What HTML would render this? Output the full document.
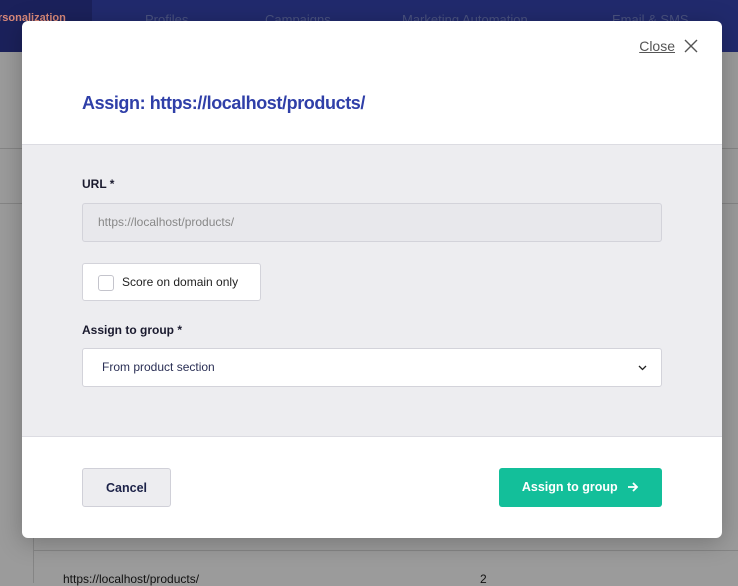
<!DOCTYPE html>
<html><head><meta charset="utf-8"><style>
*{box-sizing:border-box;margin:0;padding:0}
html,body{width:738px;height:583px;background:#9b9b9b}
body{position:relative;overflow:hidden;font-family:"Liberation Sans",sans-serif}
.bg{position:absolute;left:0;top:0;width:738px;height:583px;background:#9b9b9b}
.nav{position:absolute;left:0;top:0;width:738px;height:52px;background:#212a6d}
.nav .l{position:absolute;left:0;top:0;width:92px;height:52px;background:#1b215b}
.nav .t{position:absolute;top:12px;font-size:13px;color:#4a527f;white-space:nowrap}
.bgline{position:absolute;background:#858585}
.bgtext{position:absolute;font-size:12px;color:#111}
.modal{position:absolute;left:22px;top:21px;width:700px;height:517px;background:#fff;border-radius:6px;overflow:hidden;box-shadow:0 4px 24px rgba(0,0,0,.25)}
.close{position:absolute;right:47px;top:17px;font-size:14px;color:#555;text-decoration:underline}
.x{position:absolute;right:24px;top:18px;width:14px;height:14px}
h1{position:absolute;left:60px;top:72px;font-size:18px;color:#2f3fa8;font-weight:bold;letter-spacing:-0.4px}
.body{position:absolute;left:0;top:123px;width:700px;height:293px;background:#ededf0;border-top:1px solid #dcdce2;border-bottom:1px solid #dcdce2}
.lbl{position:absolute;left:60px;font-size:12px;font-weight:bold;color:#1a1a2e}
.inp{position:absolute;left:60px;width:580px;height:39px;border:1px solid #d3d3da;border-radius:3px;font-size:12px;padding:11px 15px}
.cb{position:absolute;left:60px;top:118px;width:179px;height:38px;background:#fff;border:1px solid #d3d3da;border-radius:3px;font-size:12px;color:#222;padding:11px 0 0 39px}
.cb i{position:absolute;left:15px;top:11px;width:16px;height:16px;border:1px solid #c4c4cc;border-radius:3px;background:#fff}
.btn{position:absolute;top:447px;height:39px;border-radius:3px;font-size:12.5px;font-weight:bold;text-align:center;line-height:38px}
</style></head><body>
<div class="bg"></div>
<div class="nav"><div class="l"></div>
<span class="t" style="left:-2px;color:#d9897a;font-weight:bold;font-size:11px">rsonalization</span>
<span class="t" style="left:145px">Profiles</span>
<span class="t" style="left:265px">Campaigns</span>
<span class="t" style="left:402px">Marketing Automation</span>
<span class="t" style="left:612px">Email &amp; SMS</span>
</div>
<div class="bgline" style="left:0;top:148px;width:738px;height:1px"></div>
<div class="bgline" style="left:0;top:203px;width:738px;height:1px"></div>
<div class="bgline" style="left:33px;top:538px;width:1px;height:45px"></div>
<div class="bgline" style="left:33px;top:550px;width:705px;height:1px"></div>
<div class="bgtext" style="left:63px;top:572px">https://localhost/products/</div>
<div class="bgtext" style="left:480px;top:572px">2</div>
<div class="modal">
<div class="close">Close</div>
<svg class="x" viewBox="0 0 14 14"><path d="M1 1L13 13M13 1L1 13" stroke="#555" stroke-width="1.4"/></svg>
<h1>Assign: https://localhost/products/</h1>
<div class="body">
<div class="lbl" style="top:32px">URL *</div>
<div class="inp" style="top:58px;background:#e8e8ec;color:#888">https://localhost/products/</div>
<div class="cb"><i></i>Score on domain only</div>
<div class="lbl" style="top:178px">Assign to group *</div>
<div class="inp" style="top:203px;background:#fff;color:#2a2f55;padding-left:19px">From product section
<svg style="position:absolute;right:14px;top:16px" width="9" height="6" viewBox="0 0 9 6"><path d="M1 1L4.5 4.5L8 1" stroke="#222" stroke-width="1.3" fill="none"/></svg></div>
</div>
<div class="btn" style="left:60px;width:89px;background:#ededf0;border:1px solid #d0d0d8;color:#1c2248">Cancel</div>
<div class="btn" style="left:477px;width:163px;background:#13bf9a;color:#fff">Assign to group
<svg style="margin-left:6px;vertical-align:-1px" width="12" height="10" viewBox="0 0 12 10"><path d="M1 5H10M6 1L10 5L6 9" stroke="#fff" stroke-width="1.8" fill="none"/></svg></div>
</div>
</body></html>
